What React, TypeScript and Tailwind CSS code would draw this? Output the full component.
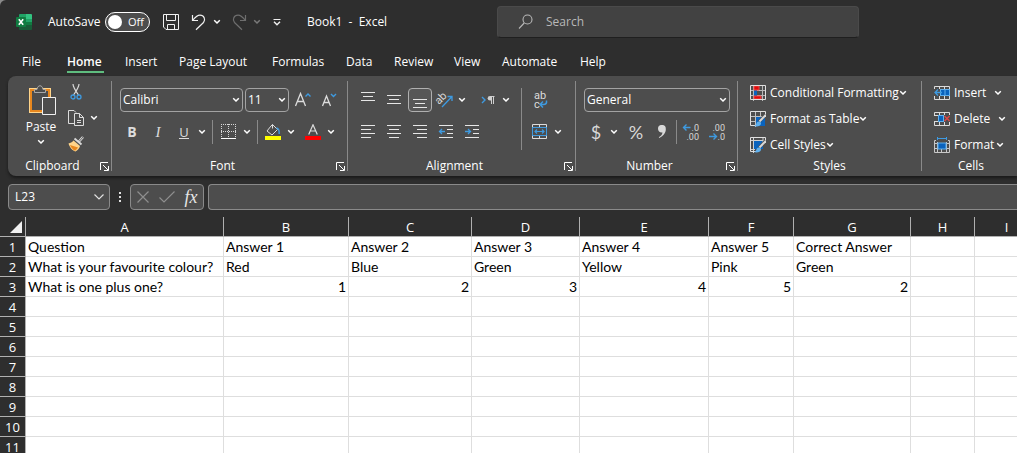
import { useState, type ReactNode } from "react";

function Chevron({ className = "text-white" }: { className?: string }) {
  return (
    <svg width="8" height="6" viewBox="0 0 8 6" fill="none" className={className} aria-hidden="true">
      <path d="M1.2 1.2 L4 4 L6.8 1.2" stroke="currentColor" strokeWidth="1.5" />
    </svg>
  );
}

function Drop({ label, className = "" }: { label: string; className?: string }) {
  return (
    <button aria-label={label} className={`flex h-6 w-3 shrink-0 items-center justify-center ${className}`}>
      <Chevron />
    </button>
  );
}

function Tool({ label, className = "w-6", children }: { label: string; className?: string; children: ReactNode }) {
  return (
    <button aria-label={label} className={`flex h-6 shrink-0 items-center justify-center ${className}`}>
      {children}
    </button>
  );
}

function Divider({ className = "h-6" }: { className?: string }) {
  return <div className={`w-px shrink-0 bg-[#8a8a8a] ${className}`} />;
}

function Combo({ label, value, options, className }: { label: string; value: string; options: string[]; className: string }) {
  return (
    <div className={`grid h-6 shrink-0 items-center ${className}`}>
      <select
        aria-label={label}
        defaultValue={value}
        className="col-start-1 row-start-1 h-6 w-full appearance-none rounded border border-[#a3a3a3] bg-transparent pl-0.5 text-xs leading-4 text-white"
      >
        {options.map((o) => (
          <option key={o} className="bg-[#4d4d4d]">{o}</option>
        ))}
      </select>
      <span className="pointer-events-none col-start-1 row-start-1 mr-[3px] justify-self-end">
        <Chevron />
      </span>
    </div>
  );
}

function Group({ title, launcher = true, className, children }: { title: string; launcher?: boolean; className: string; children: ReactNode }) {
  return (
    <section aria-label={title} className={`flex shrink-0 flex-col ${className}`}>
      <div className="h-[82px]">{children}</div>
      <div className="flex h-4 items-center">
        <span className="flex-1 text-center">{title}</span>
        {launcher && (
          <button aria-label={`${title} settings`} className="flex w-3.5 items-center justify-end pr-0.5">
            <svg width="9" height="9" viewBox="0 0 9 9" fill="none" stroke="#fff" aria-hidden="true">
              <path d="M.5 8V.5H8" />
              <path d="M3 3l5 5M8.500 4v4.500H4" />
            </svg>
          </button>
        )}
      </div>
    </section>
  );
}

function Lines({ rows }: { rows: [number, number, number][] }) {
  return (
    <svg width="16" height="16" viewBox="0 0 16 16" stroke="#e6e6e6" aria-hidden="true">
      {rows.map(([x1, x2, y]) => (
        <path key={y} d={`M${x1} ${y + 0.5}H${x2}`} />
      ))}
    </svg>
  );
}

function IndentIcon({ outward }: { outward: boolean }) {
  return (
    <svg width="16" height="16" viewBox="0 0 16 16" fill="none" stroke="#e6e6e6" aria-hidden="true">
      <path d="M1 1.500H15M9 5.500H15M9 9.500H15M1 13.500H15" />
      <path d={outward ? "M7 7.500H1.500M4 5L1.500 7.500 4 10" : "M1 7.500H6.500M4 5l2.500 2.500L4 10"} stroke="#3e9ae0" strokeWidth="1.300" />
    </svg>
  );
}

function DecimalIcon({ add }: { add: boolean }) {
  return (
    <svg width="18" height="18" viewBox="0 0 18 18" fill="none" className="overflow-visible" aria-hidden="true">
      <text x="17" y="8" textAnchor="end" fontSize="9" fill="#d8d8d8" fontFamily="Roboto, sans-serif">{add ? ".0" : ".00"}</text>
      <text x="17" y="17" textAnchor="end" fontSize="9" fill="#d8d8d8" fontFamily="Roboto, sans-serif">{add ? ".00" : ".0"}</text>
      <path d={add ? "M8.500 4.500H1.500M4.500 1.500l-3 3 3 3" : "M1 13.500H8.500M5.500 10.500l3 3-3 3"} stroke="#3e9ae0" strokeWidth="1.400" />
    </svg>
  );
}

function BrushOverlay() {
  return (
    <>
      <path d="M15.500 3.500L9 11" stroke="#4d4d4d" strokeWidth="3" />
      <path d="M15.700 4L9.500 10.500" stroke="#d8d8d8" strokeWidth="2" />
      <path d="M9.500 10.500c-2-.5-3 1-3.300 2.500-.2 1-1 1.700-2.200 2 3 1 6.500.2 7-2.300.2-1-.5-2-1.500-2.200z" fill="#5fb0ee" />
    </>
  );
}

function StyleIcon({ kind }: { kind: "conditional" | "table" | "cell" }) {
  return (
    <svg width="16" height="16" viewBox="0 0 16 16" fill="none" aria-hidden="true">
      {kind === "cell" ? (
        <>
          <rect x="3" y="4" width="10" height="8" fill="#0a63bd" />
          <path d="M3.500 0v16M13 0v5M0 3.500h16M0 12.500h5" stroke="#d0d0d0" />
        </>
      ) : kind === "table" ? (
        <>
          <rect x="6" y="6" width="9" height="9" fill="#0a63bd" />
          <path d="M5.500 0v16M10.500 0v6M0 5.500h16M0 10.500h6" stroke="#c0c0c0" />
        </>
      ) : (
        <>
          <path d="M3.500 0v16M12.500 0v16M0 5.500h16M0 10.500h16" stroke="#b8b8b8" />
          <rect x="4" y="5" width="3" height="6" fill="#0a63bd" />
          <path d="M4 1h5v4H4zM4 11h7v3H4z" fill="#e00b0b" stroke="#f04747" />
        </>
      )}
      <path d={kind === "conditional" ? "M.5 .500h15v14H.5z" : "M6 14.500H.5V.500h15V6"} stroke="#e0e0e0" />
      {kind !== "conditional" && <BrushOverlay />}
    </svg>
  );
}

function CellsIcon({ kind }: { kind: "insert" | "delete" | "format" }) {
  return (
    <svg width="16" height="16" viewBox="0 0 16 16" fill="none" aria-hidden="true">
      {kind === "insert" && (
        <>
          <path d="M.5 4V1.500h15V4M5.500 1v3M10.500 1v3M.5 11v3.500h15V11M5.500 11v4M10.500 11v4" stroke="#dcdcdc" />
          <rect x="6.500" y="4.500" width="9" height="6" fill="#0a63bd" stroke="#5fb0ee" />
          <path d="M11 5v5" stroke="#5fb0ee" />
          <path d="M8 7.500H1M4 4.500l-3 3 3 3" stroke="#3e9ae0" strokeWidth="1.300" />
        </>
      )}
      {kind === "delete" && (
        <>
          <path d="M.5 4V1.500h15V4M5.500 1v3M10.500 1v3M.5 11v3.500h15V11M5.500 11v4M10.500 11v4M0 4.500h4M0 10.500h4" stroke="#dcdcdc" />
          <rect x="4.500" y="4.500" width="5" height="6" fill="#0a63bd" stroke="#5fb0ee" />
          <path d="M10.500 5l5 5M15.500 5l-5 5" stroke="#e04848" strokeWidth="1.400" />
        </>
      )}
      {kind === "format" && (
        <>
          <path d="M3.500 0v3M12.500 0v3M3.500 1.500h9" stroke="#3e9ae0" />
          <path d="M2 3.500H.5v12h15v-12H14M3.500 5v10M12.500 5v10M7.500 11v4M0 6.500h16M0 11.500h16" stroke="#c8c8c8" />
          <rect x="4" y="6" width="8" height="6" fill="#0a63bd" stroke="#5fb0ee" />
        </>
      )}
    </svg>
  );
}

function TextTool({ icon, label, gap = "gap-0.5" }: { icon: ReactNode; label: string; gap?: string }) {
  return (
    <button className={`flex h-[26px] items-center ${gap}`}>
      <span className="flex items-center gap-1">
        {icon}
        <span>{label}</span>
      </span>
      <Chevron />
    </button>
  );
}

function TitleBar() {
  const [autoSave, setAutoSave] = useState(false);
  return (
    <header className="flex h-11 shrink-0 items-center pl-4">
      <svg width="16" height="16" viewBox="0 0 16 16" className="mr-4 shrink-0" aria-label="Excel">
        <path d="M4 0h6v5H3V1a1 1 0 0 1 1-1z" fill="#21a366" />
        <path d="M10 0h5a1 1 0 0 1 1 1v4h-6z" fill="#33c481" />
        <path d="M3 5h7v6H3z" fill="#107c41" />
        <path d="M10 5h6v5h-6z" fill="#21a366" />
        <path d="M3 10h13v5a1 1 0 0 1-1 1H4a1 1 0 0 1-1-1z" fill="#185c37" />
        <path d="M10 8h6v3h-6z" fill="#107c41" />
        <rect y="3" width="10" height="10" rx="1" fill="#107c41" />
        <path d="M2.800 5.300l4.400 5.400M7.200 5.300L2.800 10.700" stroke="#fff" strokeWidth="1.600" />
      </svg>
      <label htmlFor="autosave" className="w-[57px] shrink-0">AutoSave</label>
      <button
        id="autosave"
        role="switch"
        aria-checked={autoSave}
        onClick={() => setAutoSave(!autoSave)}
        className="flex h-5 w-[45px] shrink-0 items-center gap-1.5 rounded-full border border-white bg-[#4d4d4d] pl-0.5 text-[11px] leading-4"
      >
        <span className="size-3.5 rounded-full bg-white" />
        {autoSave ? "On" : "Off"}
      </button>
      <Tool label="Save" className="ml-[9px] w-6">
        <svg width="16" height="16" viewBox="0 0 16 16" fill="none" stroke="#f0f0f0" aria-hidden="true">
          <path d="M.5 .500h15v15H3L.5 13z" />
          <path d="M3.500 .500v6h9v-6M4.500 15.500v-5h7v5" />
        </svg>
      </Tool>
      <Tool label="Undo" className="ml-1 w-6">
        <svg width="16" height="17" viewBox="0 0 16 17" fill="none" stroke="#f0f0f0" strokeWidth="1.200" aria-hidden="true">
          <path d="M1.500 1v5.500H7" />
          <path d="M1.800 6.200C4 3.500 6 1.200 9 1.200c4 0 6 4.300 3.500 7.300L5 15.800" />
        </svg>
      </Tool>
      <Drop label="Undo history" />
      <Tool label="Redo" className="ml-1 w-6">
        <svg width="16" height="17" viewBox="0 0 16 17" fill="none" stroke="#6e6e6e" strokeWidth="1.200" aria-hidden="true">
          <path d="M14.500 1v5.500H9" />
          <path d="M14.200 6.200C12 3.500 10 1.200 7 1.200 3 1.200 1 5.500 3.500 8.500L11 15.800" />
        </svg>
      </Tool>
      <button aria-label="Redo history" className="flex h-6 w-3 items-center justify-center">
        <Chevron className="text-[#7a7a7a]" />
      </button>
      <Tool label="Customize Quick Access Toolbar" className="ml-0.5 w-6">
        <svg width="8" height="7" viewBox="0 0 8 7" fill="none" stroke="#f0f0f0" aria-hidden="true">
          <path d="M.500 .500h7" />
          <path d="M1 2.700l3 3 3-3" strokeWidth="1.400" />
        </svg>
      </Tool>
      <h1 className="ml-[18px] w-[190px] shrink-0 whitespace-pre">Book1  -  Excel</h1>
      <label className="flex h-8 w-[362px] shrink items-center gap-3 rounded border border-[#4a4a4a] border-b-[#1f1f1f] bg-[#424242] pl-5">
        <svg width="16" height="16" viewBox="0 0 16 16" fill="none" stroke="#b8b8b8" strokeWidth="1.100" aria-hidden="true">
          <circle cx="9.500" cy="5.500" r="4.500" />
          <path d="M6.200 9L1 14.500" />
        </svg>
        <input aria-label="Search" placeholder="Search" className="min-w-0 flex-1 bg-transparent outline-none placeholder:text-[#b8b8b8]" />
      </label>
    </header>
  );
}

const tabs = [
  { name: "File", width: "w-6" },
  { name: "Home", width: "w-[37px]" },
  { name: "Insert", width: "w-[33px]" },
  { name: "Page Layout", width: "w-[72px]" },
  { name: "Formulas", width: "w-[53px]" },
  { name: "Data", width: "w-[27px]" },
  { name: "Review", width: "w-[39px]" },
  { name: "View", width: "w-[27px]" },
  { name: "Automate", width: "w-[57px]" },
  { name: "Help", width: "w-[27px]" },
];

function Tabs() {
  return (
    <nav className="flex h-8 shrink-0 items-start gap-[21px] pt-2 pl-[22px]">
      {tabs.map((t) => (
        <button
          key={t.name}
          className={`h-[21px] shrink-0 border-b-2 text-left leading-[18px] whitespace-nowrap ${t.width} ${t.name === "Home" ? "border-[#5fbd7f] font-semibold" : "border-transparent"}`}
        >
          {t.name}
        </button>
      ))}
    </nav>
  );
}

function Ribbon() {
  const rule = "mt-[5px] h-[90px]";
  return (
    <div className="ml-2 flex h-[100px] shrink-0 overflow-hidden rounded-l-lg bg-[#4d4d4d] shadow-[0_2px_3px_#1a1a1a]">
      <Group title="Clipboard" className="w-[103px]">
        <div className="flex gap-1.5 pt-[3px] pl-3">
          <button className="flex w-[42px] flex-col items-center pt-1.5">
            <svg width="28" height="31" viewBox="0 0 28 31" fill="none" className="ml-1" aria-hidden="true">
              <path d="M1 4h20v23H1z" stroke="#ffd48a" strokeWidth="2" />
              <path d="M2 5h18v21H2z" stroke="#e8871e" strokeWidth="2" />
              <path d="M5.500 7.500v-3H8c.5-5 5.500-5 6 0h2.500v3z" fill="#4d4d4d" stroke="#a8a8a8" />
              <path d="M13.500 12.500h13v17h-13z" fill="#4d4d4d" stroke="#f0f0f0" />
            </svg>
            <span className="mt-[3px] leading-4">Paste</span>
            <span className="mt-1"><Chevron /></span>
          </button>
          <div className="flex flex-col gap-0.5 pt-px">
            <Tool label="Cut" className="w-4">
              <svg width="12" height="16" viewBox="0 0 12 16" fill="none" aria-hidden="true">
                <path d="M3 0c0 3 2 6 5.500 11M9 0c0 3-2 6-5.500 11" stroke="#d8d8d8" strokeWidth="1.200" />
                <circle cx="3" cy="13" r="2" stroke="#3e9ae0" strokeWidth="1.300" />
                <circle cx="9" cy="13" r="2" stroke="#3e9ae0" strokeWidth="1.300" />
              </svg>
            </Tool>
            <div className="flex">
              <Tool label="Copy" className="w-4">
                <svg width="16" height="16" viewBox="0 0 16 16" fill="none" stroke="#dcdcdc" aria-hidden="true">
                  <path d="M6 13.500H.500V.500H6l2 2" />
                  <path d="M6.500 3.500h5l4 4v8h-9zM11.500 3.500v4h4M9 10.500h4M9 12.500h4" />
                </svg>
              </Tool>
              <Drop label="Copy options" className="ml-1" />
            </div>
            <Tool label="Format Painter" className="w-4">
              <svg width="16" height="16" viewBox="0 0 16 16" fill="none" aria-hidden="true">
                <path d="M15 1l-4.500 5" stroke="#d8d8d8" strokeWidth="2.600" />
                <path d="M15 1l-4 4.500" stroke="#4d4d4d" strokeWidth=".8" />
                <path d="M6.500 2.500l7 6" stroke="#d8d8d8" strokeWidth="2" />
                <path d="M5.500 4.500C4 6.500 2.500 7 .5 7.500 1.500 11 4 14.500 7.500 15.500c2-1 4-3 4.500-5.500z" fill="#ffd48a" />
                <path d="M2 9l8 2.500c-1 1.500-1.700 2.300-3 3.200C4.500 13.500 3 11.500 2 9z" fill="#e8871e" />
              </svg>
            </Tool>
          </div>
        </div>
      </Group>
      <Divider className={rule} />
      <Group title="Font" className="w-[235px]">
        <div className="flex flex-col gap-2 pt-3 pl-2">
          <div className="flex">
            <Combo label="Font" value="Calibri" options={["Calibri", "Arial"]} className="w-[123px]" />
            <Combo label="Font size" value="11" options={["10", "11", "12"]} className="ml-0.5 w-11" />
            <Tool label="Increase font size" className="ml-0.5 w-6">
              <svg width="18" height="16" viewBox="0 0 18 16" fill="none" aria-hidden="true">
                <path d="M1.500 14L6.500 1.500 11.500 14M3.300 9.500h6.400" stroke="#dcdcdc" strokeWidth="1.300" />
                <path d="M11.500 4.500L14 2l2.500 2.500" stroke="#3e9ae0" strokeWidth="1.400" />
              </svg>
            </Tool>
            <Tool label="Decrease font size" className="ml-0.5 w-6">
              <svg width="16" height="16" viewBox="0 0 16 16" fill="none" aria-hidden="true">
                <path d="M1.500 14L5.500 4 9.500 14M3 10.500h5" stroke="#dcdcdc" strokeWidth="1.300" />
                <path d="M10 2l2.500 2.500L15 2" stroke="#3e9ae0" strokeWidth="1.400" />
              </svg>
            </Tool>
          </div>
          <div className="flex">
            <Tool label="Bold"><span className="text-sm font-bold text-[#dcdcdc]">B</span></Tool>
            <Tool label="Italic" className="ml-0.5 w-6"><span className="font-['Liberation_Serif',serif] text-[15px] text-[#dcdcdc] italic">I</span></Tool>
            <Tool label="Underline" className="ml-0.5 w-6">
              <span className="border-b border-[#dcdcdc] text-[13px] leading-3 text-[#dcdcdc]">U</span>
            </Tool>
            <Drop label="Underline options" />
            <Divider className="mx-1 h-6" />
            <Tool label="Borders">
              <svg width="16" height="16" viewBox="0 0 16 16" fill="none" aria-hidden="true">
                <path d="M.500 0v14M14.500 0v14M7.500 0v14M0 .500h15M0 7.500h15" stroke="#d8d8d8" strokeDasharray="1 1" />
                <path d="M0 14.500h15" stroke="#fff" />
              </svg>
            </Tool>
            <Drop label="Border options" />
            <Divider className="mr-[3px] ml-1 h-6" />
            <Tool label="Fill color">
              <svg width="16" height="16" viewBox="0 0 16 16" fill="none" aria-hidden="true">
                <path d="M6 2L2 7l5 4 5.500-5.500-5-5z" stroke="#dcdcdc" />
                <path d="M7.500 .5v4" stroke="#dcdcdc" />
                <path d="M11.500 4c2 .5 3 2 2.700 6" stroke="#3e9ae0" strokeWidth="1.500" />
                <path d="M0 12h16v4H0z" fill="#ff0" />
              </svg>
            </Tool>
            <Drop label="Fill color options" />
            <Tool label="Font color" className="ml-1 w-6">
              <svg width="16" height="16" viewBox="0 0 16 16" fill="none" aria-hidden="true">
                <path d="M3.700 10.500L8 .8l4.300 9.700M5.200 7h5.600" stroke="#dcdcdc" strokeWidth="1.200" />
                <path d="M0 12h16v4H0z" fill="#f00" />
              </svg>
            </Tool>
            <Drop label="Font color options" />
          </div>
        </div>
      </Group>
      <Divider className={rule} />
      <Group title="Alignment" className="w-[227px]">
        <div className="flex pt-3 pl-2">
          <div className="flex w-[165px] flex-col gap-2">
            <div className="flex gap-0.5">
              <Tool label="Top align"><Lines rows={[[1, 15, 0], [3, 13, 4], [1, 15, 8]]} /></Tool>
              <Tool label="Middle align"><Lines rows={[[1, 15, 3], [3, 13, 7], [1, 15, 11]]} /></Tool>
              <button aria-label="Bottom align" className="flex size-6 items-center justify-center rounded border border-[#b0b0b0] bg-[#575757]">
                <Lines rows={[[1, 15, 7], [3, 13, 11], [1, 15, 15]]} />
              </button>
              <Tool label="Orientation" className="w-[22px]">
                <svg width="18" height="18" viewBox="0 0 18 18" fill="none" className="overflow-visible" aria-hidden="true">
                  <text x="0" y="11" fontSize="11" fill="#d8d8d8" fontFamily="Roboto, sans-serif" transform="rotate(-45 5 9)">ab</text>
                  <path d="M6 16L16 5.500M11.500 5.500H16V10" stroke="#3e9ae0" strokeWidth="1.300" />
                </svg>
              </Tool>
              <Drop label="Orientation options" className="-ml-0.5" />
              <Tool label="Text direction" className="ml-1.5 w-6">
                <svg width="14" height="12" viewBox="0 0 14 12" fill="none" aria-hidden="true">
                  <path d="M1 3l3 3-3 3" stroke="#3e9ae0" strokeWidth="1.400" />
                  <path d="M13.500 2.500H9M10.500 2v8M12.500 2v8" stroke="#d0d0d0" />
                  <path d="M10.500 2H9a2.300 2.300 0 0 0 0 4.600h1.500z" fill="#d0d0d0" />
                </svg>
              </Tool>
              <Drop label="Text direction options" className="-ml-0.5" />
            </div>
            <div className="flex gap-0.5">
              <Tool label="Align left"><Lines rows={[[1, 15, 1], [1, 11, 5], [1, 15, 9], [1, 11, 13]]} /></Tool>
              <Tool label="Center"><Lines rows={[[1, 15, 1], [3, 13, 5], [1, 15, 9], [3, 13, 13]]} /></Tool>
              <Tool label="Align right"><Lines rows={[[1, 15, 1], [5, 15, 5], [1, 15, 9], [5, 15, 13]]} /></Tool>
              <Tool label="Decrease indent"><IndentIcon outward /></Tool>
              <Tool label="Increase indent"><IndentIcon outward={false} /></Tool>
            </div>
          </div>
          <Divider className="h-[62px]" />
          <div className="flex flex-col gap-2 pl-1.5">
            <Tool label="Wrap text">
              <svg width="16" height="18" viewBox="0 0 16 18" fill="none" className="overflow-visible" aria-hidden="true">
                <text x="2" y="8" fontSize="11" fill="#dcdcdc" fontFamily="Roboto, sans-serif">ab</text>
                <text x="2" y="17" fontSize="11" fill="#dcdcdc" fontFamily="Roboto, sans-serif">c</text>
                <path d="M14.500 9.500c.5 3-1 4-3 4H8.500M11 10.500l-3 3 3 3" stroke="#3e9ae0" strokeWidth="1.500" />
              </svg>
            </Tool>
            <div className="flex">
              <Tool label="Merge and center">
                <svg width="16" height="16" viewBox="0 0 16 16" fill="none" aria-hidden="true">
                  <path d="M.500 .500h14v14H.500zM7.500 .500v3M7.500 12v3" stroke="#dcdcdc" />
                  <path d="M.500 3.500h14v8H.500z" fill="#4d4d4d" stroke="#3e9ae0" />
                  <path d="M3 7.500h9M5 5.500l-2 2 2 2M10 5.500l2 2-2 2" stroke="#3e9ae0" strokeWidth="1.200" />
                </svg>
              </Tool>
              <Drop label="Merge options" />
            </div>
          </div>
        </div>
      </Group>
      <Divider className={rule} />
      <Group title="Number" className="w-[161px]">
        <div className="flex flex-col gap-2 pt-3 pl-2">
          <Combo label="Number format" value="General" options={["General", "Number", "Currency"]} className="w-[146px]" />
          <div className="flex">
            <Tool label="Accounting format"><span className="font-['Lato',sans-serif] text-lg leading-5 text-[#d8d8d8]">$</span></Tool>
            <Drop label="Accounting options" />
            <Tool label="Percent style" className="ml-1 w-6"><span className="font-['Lato',sans-serif] text-lg leading-5 text-[#d8d8d8]">%</span></Tool>
            <Tool label="Comma style" className="ml-0.5 w-6">
              <svg width="8" height="14" viewBox="0 0 8 14" fill="#d8d8d8" aria-hidden="true">
                <path d="M0 3.800a3.800 3.800 0 0 1 7.800 0C8.100 8 5 11.500 1.200 13L.8 12.200C3 11 4.200 9.500 4.500 7.500 2 8 0 6 0 3.800z" />
              </svg>
            </Tool>
            <Divider className="mx-0.5 h-6" />
            <Tool label="Increase decimal"><DecimalIcon add /></Tool>
            <Tool label="Decrease decimal" className="ml-0.5 w-6"><DecimalIcon add={false} /></Tool>
          </div>
        </div>
      </Group>
      <Divider className={rule} />
      <Group title="Styles" launcher={false} className="w-[183px]">
        <div className="flex flex-col items-start pt-1 pl-3">
          <TextTool icon={<StyleIcon kind="conditional" />} label="Conditional Formatting" gap="gap-0" />
          <TextTool icon={<StyleIcon kind="table" />} label="Format as Table" gap="gap-0" />
          <TextTool icon={<StyleIcon kind="cell" />} label="Cell Styles" gap="gap-0" />
        </div>
      </Group>
      <Divider className={rule} />
      <Group title="Cells" launcher={false} className="w-[98px]">
        <div className="flex flex-col items-start pt-1 pl-3">
          <TextTool icon={<CellsIcon kind="insert" />} label="Insert" gap="gap-2" />
          <TextTool icon={<CellsIcon kind="delete" />} label="Delete" gap="gap-2" />
          <TextTool icon={<CellsIcon kind="format" />} label="Format" />
        </div>
      </Group>
    </div>
  );
}

function FormulaBar() {
  return (
    <div className="flex h-[26px] shrink-0 pl-2">
      <div className="grid w-[102px] shrink-0 items-center">
        <select aria-label="Name box" className="col-start-1 row-start-1 h-[26px] w-full appearance-none rounded border border-[#8a8a8a] bg-[#4d4d4d] pl-1.5 text-xs text-white">
          <option>L23</option>
        </select>
        <svg width="12" height="8" viewBox="0 0 12 8" fill="none" stroke="#e0e0e0" strokeWidth="1.200" className="pointer-events-none col-start-1 row-start-1 mr-[5px] justify-self-end" aria-hidden="true">
          <path d="M1.500 1.500L6 6l4.500-4.500" />
        </svg>
      </div>
      <svg width="20" height="26" viewBox="0 0 20 26" fill="#e0e0e0" className="shrink-0" aria-hidden="true">
        <path d="M9 8h2v2H9zM9 12h2v2H9zM9 16h2v2H9z" />
      </svg>
      <div className="flex w-[74px] shrink-0 items-center rounded border border-[#8a8a8a] bg-[#4d4d4d]">
        <Tool label="Cancel">
          <svg width="12" height="12" viewBox="0 0 12 12" stroke="#8e8e8e" strokeWidth="1.200" aria-hidden="true">
            <path d="M.5 .5l11 11M11.500 .5l-11 11" />
          </svg>
        </Tool>
        <Tool label="Enter">
          <svg width="16" height="12" viewBox="0 0 16 12" fill="none" stroke="#8e8e8e" strokeWidth="1.200" aria-hidden="true">
            <path d="M.5 6.500l4.500 4.500L15.500 .5" />
          </svg>
        </Tool>
        <Tool label="Insert function"><span className="font-['Liberation_Serif',serif] text-lg leading-5 text-[#e6e6e6] italic">fx</span></Tool>
      </div>
      <input aria-label="Formula" className="ml-1 min-w-0 flex-1 rounded-l border border-r-0 border-[#8a8a8a] bg-[#4d4d4d] px-2 outline-none" />
    </div>
  );
}

const columns = [
  { name: "A", width: "w-[198px]" },
  { name: "B", width: "w-[125px]" },
  { name: "C", width: "w-[123px]" },
  { name: "D", width: "w-[108px]" },
  { name: "E", width: "w-[129px]" },
  { name: "F", width: "w-[85px]" },
  { name: "G", width: "w-[117px]" },
  { name: "H", width: "w-16" },
  { name: "I", width: "w-16" },
];

const data: (string | number)[][] = [
  ["Question", "Answer 1", "Answer 2", "Answer 3", "Answer 4", "Answer 5", "Correct Answer"],
  ["What is your favourite colour?", "Red", "Blue", "Green", "Yellow", "Pink", "Green"],
  ["What is one plus one?", 1, 2, 3, 4, 5, 2],
];

function Sheet() {
  return (
    <main className="mt-[7px] min-h-0 flex-1 overflow-hidden bg-white">
      <table className="w-max table-fixed border-separate border-spacing-0">
        <colgroup>
          <col className="w-[26px]" />
          {columns.map((c) => (
            <col key={c.name} className={c.width} />
          ))}
        </colgroup>
        <thead>
          <tr className="h-5 bg-[#2e2e2e] text-[13px] leading-4">
            <th aria-label="Select all" className="w-[26px] border-r border-b border-[#b0b0b0] p-0">
              <svg width="12" height="12" viewBox="0 0 12 12" fill="#f0f0f0" className="mr-[3px] ml-auto" aria-hidden="true">
                <path d="M12 0v12H0z" />
              </svg>
            </th>
            {columns.map((c) => (
              <th key={c.name} scope="col" className={`border-r border-b border-[#b0b0b0] p-0 font-normal ${c.width}`}>{c.name}</th>
            ))}
          </tr>
        </thead>
        <tbody>
          {Array.from({ length: 11 }, (_, r) => (
            <tr key={r} className="h-5 leading-[17px]">
              <th scope="row" className="border-r border-b border-[#b0b0b0] bg-[#2e2e2e] p-0 pt-0.5 text-[13px] font-normal">{r + 1}</th>
              {columns.map((c, i) => {
                const v = data[r]?.[i];
                return (
                  <td
                    key={c.name}
                    className={`border-r border-b border-[#dedede] px-0.5 py-0 font-['Lato',sans-serif] text-sm leading-[17px] whitespace-nowrap text-black ${typeof v === "number" ? "text-right" : "text-left"}`}
                  >
                    {v}
                  </td>
                );
              })}
            </tr>
          ))}
        </tbody>
      </table>
    </main>
  );
}

export default function App() {
  return (
    <div className="h-screen bg-[#8a8a8a]">
      <div className="flex h-full flex-col overflow-hidden rounded-tl-md bg-[#2e2e2e] font-['Open_Sans',sans-serif] text-xs leading-4 text-white">
        <TitleBar />
        <Tabs />
        <Ribbon />
        <div className="h-2 shrink-0" />
        <FormulaBar />
        <Sheet />
      </div>
    </div>
  );
}
